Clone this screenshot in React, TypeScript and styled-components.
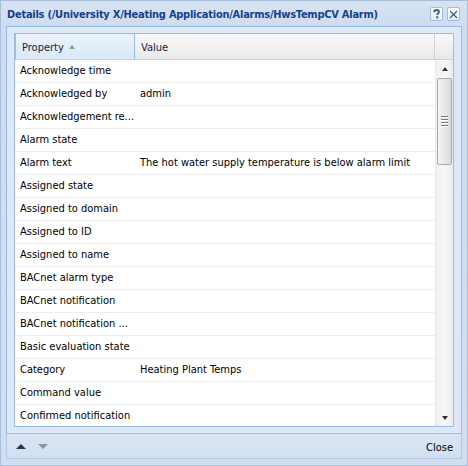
import React from "react";
import styled, { createGlobalStyle } from "styled-components";

interface Row {
  name: string;
  value?: string;
}

const rows: Row[] = [
  { name: "Acknowledge time" },
  { name: "Acknowledged by", value: "admin" },
  { name: "Acknowledgement re..." },
  { name: "Alarm state" },
  { name: "Alarm text", value: "The hot water supply temperature is below alarm limit" },
  { name: "Assigned state" },
  { name: "Assigned to domain" },
  { name: "Assigned to ID" },
  { name: "Assigned to name" },
  { name: "BACnet alarm type" },
  { name: "BACnet notification" },
  { name: "BACnet notification ..." },
  { name: "Basic evaluation state" },
  { name: "Category", value: "Heating Plant Temps" },
  { name: "Command value" },
  { name: "Confirmed notification" },
];

const FONT = `Tahoma, "DejaVu Sans Condensed", "Liberation Sans", sans-serif`;

const GlobalStyle = createGlobalStyle`
  html, body {
    margin: 0;
    padding: 0;
    background: #d6e1ef;
  }
  body {
    font-family: ${FONT};
    font-size: 11px;
  }
`;

const Window = styled.div`
  width: 468px;
  height: 466px;
  box-sizing: border-box;
  border: 1px solid #a9bfd9;
  background: linear-gradient(#d7e3f2, #cfdcee 26px, #d3dfef);
  display: flex;
  flex-direction: column;
  overflow: hidden;
`;

const TitleBar = styled.div`
  height: 25px;
  flex: none;
  display: flex;
  align-items: center;
  justify-content: space-between;
  padding: 0 7px 0 6px;
`;

const Title = styled.div`
  color: #15428b;
  font-weight: bold;
  font-size: 11px;
  letter-spacing: -0.25px;
  white-space: nowrap;
  margin-top: 1px;
`;

const Tools = styled.div`
  display: flex;
  gap: 4px;
  margin-top: 1px;
`;

const ToolButton = styled.div`
  width: 13px;
  height: 14px;
  box-sizing: border-box;
  border: 1px solid #a3bde0;
  border-radius: 2px;
  background: linear-gradient(#ffffff, #e4eefa);
  display: flex;
  align-items: center;
  justify-content: center;
  color: #2d5c9e;
`;

const Body = styled.div`
  flex: none;
  height: 408px;
  margin: 0 5px;
  box-sizing: border-box;
  border: 1px solid #99bbe8;
  background: #dfe8f6;
  padding: 6px 7px 6px 7px;
  display: flex;
`;

const Grid = styled.div`
  flex: 1;
  border: 1px solid #99bbe8;
  background: #fff;
  display: flex;
  flex-direction: column;
  overflow: hidden;
`;

const HeaderRow = styled.div`
  display: grid;
  grid-template-columns: 120px 300px 1fr;
  height: 25px;
  border-bottom: 1px solid #d0d0d0;
  flex: none;
`;

const HeaderCell = styled.div<{ sorted?: boolean; last?: boolean }>`
  display: flex;
  align-items: center;
  gap: 5px;
  padding: 1px 6px 0;
  color: #1a1f3d;
  font-size: 11px;
  border-right: ${(p) =>
    p.last ? "none" : p.sorted ? "1px solid #99bbe8" : "1px solid #d0d0d0"};
  border-left: ${(p) => (p.sorted ? "1px solid #99bbe8" : "none")};
  background: ${(p) =>
    p.sorted
      ? "linear-gradient(#ebf3fd, #dae7f8)"
      : "linear-gradient(#f9f9f9, #e9e9ea)"};
`;

const SortArrow = styled.span`
  width: 0;
  height: 0;
  border-left: 3.5px solid transparent;
  border-right: 3.5px solid transparent;
  border-bottom: 4px solid #7fa86c;
  margin-top: -1px;
`;

const Content = styled.div`
  flex: 1;
  display: flex;
  overflow: hidden;
`;

const RowList = styled.div`
  flex: 1;
  overflow: hidden;
`;

const DataRow = styled.div`
  display: grid;
  grid-template-columns: 120px 1fr;
  height: 22px;
  border-bottom: 1px solid #ededed;
  align-items: center;
  color: #000;
`;

const Cell = styled.div`
  padding: 0 5px;
  margin-bottom: 2px;
  white-space: nowrap;
  overflow: hidden;
`;

const ScrollBar = styled.div`
  width: 17px;
  flex: none;
  border-left: 1px solid #e8e8e8;
  background: linear-gradient(90deg, #f0f0f0, #f7f7f7 50%, #ececec);
  display: flex;
  flex-direction: column;
  align-items: center;
`;

const ScrollArrow = styled.div<{ down?: boolean }>`
  height: 17px;
  width: 17px;
  display: flex;
  align-items: center;
  justify-content: center;
  margin-top: ${(p) => (p.down ? "auto" : "0")};
  &::after {
    content: "";
    width: 0;
    height: 0;
    border-left: 3.5px solid transparent;
    border-right: 3.5px solid transparent;
    ${(p) =>
      p.down ? "border-top: 4px solid #303030;" : "border-bottom: 4px solid #303030;"}
  }
`;

const Thumb = styled.div`
  width: 15px;
  height: 87px;
  box-sizing: border-box;
  margin-top: 1px;
  border: 1px solid #a9a9a9;
  border-radius: 2px;
  background: linear-gradient(90deg, #f4f4f4, #e6e6e6 60%, #d8d8d8);
  display: flex;
  flex-direction: column;
  align-items: center;
  justify-content: center;
  gap: 1px;
`;

const Grip = styled.span`
  width: 7px;
  height: 1px;
  background: #7a7a7a;
  box-shadow: 0 1px 0 #fff;
  margin-bottom: 1px;
`;

const Footer = styled.div`
  flex: none;
  height: 25px;
  margin: 0 5px;
  box-sizing: border-box;
  border: 1px solid #b4c8e4;
  border-top: none;
  background: linear-gradient(#d9e5f4, #d2e0f1);
  display: flex;
  align-items: center;
  justify-content: space-between;
  padding: 0 7px 0 9px;
`;

const NavArrows = styled.div`
  display: flex;
  gap: 12px;
  align-items: center;
`;

const NavArrow = styled.span<{ down?: boolean; disabled?: boolean }>`
  width: 0;
  height: 0;
  border-left: 5px solid transparent;
  border-right: 5px solid transparent;
  ${(p) =>
    p.down
      ? `border-top: 5px solid ${p.disabled ? "#8b93a9" : "#2c335f"};`
      : `border-bottom: 5px solid ${p.disabled ? "#8b93a9" : "#2c335f"};`}
`;

const CloseButton = styled.div`
  color: #000;
  font-size: 11px;
  padding: 0 1px;
  margin-top: 2px;
`;

export default function App() {
  return (
    <>
      <GlobalStyle />
      <Window>
        <TitleBar>
          <Title>Details (/University X/Heating Application/Alarms/HwsTempCV Alarm)</Title>
          <Tools>
            <ToolButton>
              <svg width="9" height="10" viewBox="0 0 9 10">
                <path
                  d="M2 3.2 C2 1.5 3.2 1 4.5 1 C6 1 7 1.8 7 3 C7 4.3 5.2 4.6 5.2 6"
                  fill="none"
                  stroke="#2d5c9e"
                  strokeWidth="1.8"
                />
                <rect x="4.2" y="7.3" width="2" height="2" fill="#2d5c9e" />
              </svg>
            </ToolButton>
            <ToolButton>
              <svg width="9" height="9" viewBox="0 0 9 9">
                <path d="M1 1 L8 8 M8 1 L1 8" stroke="#2d5c9e" strokeWidth="1.2" />
              </svg>
            </ToolButton>
          </Tools>
        </TitleBar>
        <Body>
          <Grid>
            <HeaderRow>
              <HeaderCell sorted>
                Property
                <SortArrow />
              </HeaderCell>
              <HeaderCell>Value</HeaderCell>
              <HeaderCell last />
            </HeaderRow>
            <Content>
              <RowList>
                {rows.map((r) => (
                  <DataRow key={r.name}>
                    <Cell>{r.name}</Cell>
                    <Cell>{r.value ?? ""}</Cell>
                  </DataRow>
                ))}
              </RowList>
              <ScrollBar>
                <ScrollArrow />
                <Thumb>
                  <Grip />
                  <Grip />
                  <Grip />
                  <Grip />
                </Thumb>
                <ScrollArrow down />
              </ScrollBar>
            </Content>
          </Grid>
        </Body>
        <Footer>
          <NavArrows>
            <NavArrow />
            <NavArrow down disabled />
          </NavArrows>
          <CloseButton>Close</CloseButton>
        </Footer>
      </Window>
    </>
  );
}
